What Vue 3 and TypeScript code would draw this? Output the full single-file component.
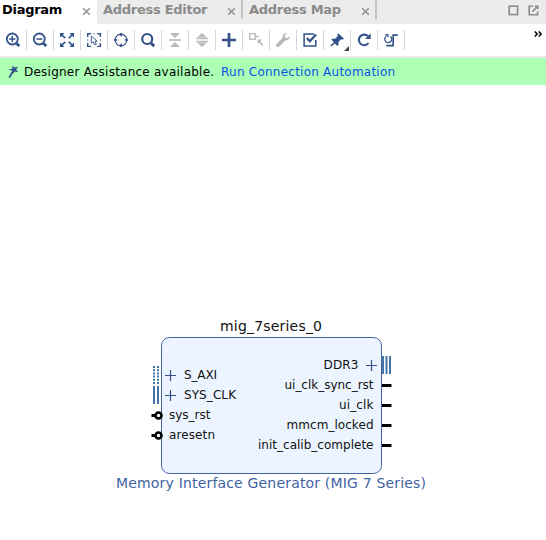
<script setup lang="ts">
interface Tab { label: string; active: boolean; cls: string }
const tabs: Tab[] = [
  { label: 'Diagram', active: true, cls: 't1' },
  { label: 'Address Editor', active: false, cls: 't2' },
  { label: 'Address Map', active: false, cls: 't3' },
]

const tools: string[] = ['zoomin', 'zoomout', 'fit', 'select', 'target', 'search', 'collapse', 'expand', 'add', 'hier', 'wrench', 'validate', 'pin', 'refresh', 'regen']

interface Pin { name: string; y: number; width: number }
const outputs: Pin[] = [
  { name: 'ui_clk_sync_rst', y: 385, width: 89 },
  { name: 'ui_clk', y: 405, width: 34.5 },
  { name: 'mmcm_locked', y: 425, width: 87 },
  { name: 'init_calib_complete', y: 445, width: 115.5 },
]
const inputs: Pin[] = [
  { name: 'sys_rst', y: 415, width: 41.5 },
  { name: 'aresetn', y: 435, width: 46 },
]
</script>

<template>
  <div class="window">
    <header class="tabs">
      <div v-for="t in tabs" :key="t.label" class="tab" :class="[t.cls, { active: t.active }]">
        <span class="label">{{ t.label }}</span>
        <svg class="close" width="9" height="9" viewBox="0 0 9 9"><path d="M1.2 1.2 7.8 7.8M7.8 1.2 1.2 7.8" /></svg>
      </div>
      <div class="controls">
        <svg width="11" height="11" viewBox="0 0 11 11"><rect x="1.2" y="1.2" width="8.4" height="8.4" /></svg>
        <svg width="11" height="11" viewBox="0 0 11 11"><path d="M5 1.2H1.2V9.8H9.6V6.5M4.3 6.7 8.6 2.4" /><path class="solid" d="M6 .5H10.5V5Z" /></svg>
      </div>
    </header>

    <nav class="toolbar">
      <div v-for="name in tools" :key="name" class="tool">
        <svg width="18" height="18" viewBox="0 0 18 18">
          <g v-if="name === 'zoomin' || name === 'zoomout'">
            <circle cx="8.3" cy="8" r="5.5" stroke-width="1.8" />
            <path d="M12 12 15.3 15.1" stroke-width="2.8" />
            <path d="M5.2 8H11.4" stroke-width="1.5" />
            <path v-if="name === 'zoomin'" d="M8.3 4.9V11.1" stroke-width="1.5" />
          </g>
          <g v-else-if="name === 'fit'">
            <path d="M3.5 3.5 7.2 7.2M14.5 3.5 10.8 7.2M3.5 14.5 7.2 10.8M14.5 14.5 10.8 10.8" stroke-width="1.7" />
            <path class="fill" d="M2 2H6.5L2 6.5ZM16 2H11.5L16 6.5ZM2 16H6.5L2 11.5ZM16 16H11.5L16 11.5Z" />
          </g>
          <g v-else-if="name === 'select'">
            <path d="M2.7 6V2.7H6M12.2 2.7H15.4V6M15.4 12V15.4H12.2M6 15.4H2.7V12" stroke-width="1.4" />
            <path d="M8 2.7H10.2M15.4 8V10.2M2.7 10.2V8" stroke-width="1" opacity=".6" />
            <path d="M6.3 5V12.3L8.2 10.8 9.9 14 11.4 13.2 9.9 10.3H12.2Z" stroke-width=".9" />
          </g>
          <g v-else-if="name === 'target'">
            <circle cx="9" cy="9" r="5.8" stroke-width="1.2" />
            <path d="M9 2V5.3M9 12.7V16M2 9H5.3M12.7 9H16" stroke-width="1.6" />
          </g>
          <g v-else-if="name === 'search'">
            <circle cx="8.2" cy="8" r="5" stroke-width="2.2" />
            <path d="M12 12 15.2 15.2" stroke-width="3" />
          </g>
          <g v-else-if="name === 'collapse'" class="off">
            <path class="fill" d="M4 2H14L9 7ZM4 16H14L9 11Z" />
            <path d="M3 9H15" stroke-width="1.6" />
          </g>
          <g v-else-if="name === 'expand'" class="off">
            <path class="fill" d="M4 6.5H14L9 2ZM4 11.5H14L9 16Z" />
            <path d="M3.2 7.5H14.8M3.2 10.5H14.8" stroke-width="1.4" />
          </g>
          <path v-else-if="name === 'add'" d="M9 2V16M2 9H16" stroke-width="2.7" />
          <g v-else-if="name === 'hier'" class="off">
            <rect x="2.7" y="2.7" width="5.6" height="5.6" stroke-width="1.3" />
            <path d="M9 5.5H11.5M12 10 15.5 14.5" stroke-width="1.5" />
            <path class="fill" d="M10.7 8.5H15.2L10.7 13Z" />
          </g>
          <g v-else-if="name === 'wrench'" class="off">
            <path d="M4 14.1 10.2 7.9" stroke-width="3.8" stroke-linecap="round" />
            <path class="fill" d="M12.8 2 10.9 2.3C8.6 3.4 8.2 5.2 8.8 7.4L11 9.3C14 9.8 15.9 7.9 15.8 5L13.2 7.2 11 6.6 10.6 4.5Z" />
          </g>
          <g v-else-if="name === 'validate'">
            <path d="M13 3.1H3.1V14.9H14.8V9" stroke-width="1.5" />
            <path d="M6 7 8.8 10.3 15 3.5" stroke-width="2.2" />
          </g>
          <g v-else-if="name === 'pin'">
            <path class="fill" d="M10.3 2.2 16 7.7 14.7 8.4 12.8 8.5 10.4 11 10.5 13.8 9.4 15 3.3 8.6 4.5 7.7 7.1 7.8 9.6 5.3 9.5 3.2Z" />
            <path d="M7.4 11.2 2.8 15" stroke-width="1.6" />
          </g>
          <g v-else-if="name === 'refresh'">
            <path d="M13.1 5.3A5.3 5.3 0 1 0 13.5 12" stroke-width="2.1" />
            <path class="fill" d="M15.7 2.3V8H10.1Z" />
          </g>
          <g v-else>
            <path d="M4.3 5.2A3.5 3.5 0 1 0 8.5 5.4" stroke-width="1.3" />
            <path class="fill" d="M2.8 3H6.5V6.7Z" />
            <path d="M4.2 14.6H11.2V4.1H15.8" stroke-width="1.7" />
          </g>
        </svg>
        <svg v-if="name === 'pin'" class="corner" width="5" height="5" viewBox="0 0 5 5"><path d="M5 0V5H0Z" /></svg>
      </div>
      <svg class="more" width="9" height="6" viewBox="0 0 9 6"><path d="M.7.5 3.2 3 .7 5.5M4.7.5 7.2 3 4.7 5.5" /></svg>
    </nav>

    <div class="banner">
      <svg width="14" height="14" viewBox="0 0 14 14"><path class="wand" d="M5.8 6.5 2.3 12.6" /><path class="star" d="M5.5 .5 7.5 2.5 11 1.7 9.2 4.4 11.3 6.9 7.9 6.6 6.3 8.6 5.4 6 1.6 4.2 5.4 3.7Z" /></svg>
      <span class="message">Designer Assistance available.</span>
      <a class="link">Run Connection Automation</a>
    </div>

    <svg class="canvas" width="546" height="455" viewBox="0 85 546 455">
      <text class="title" x="220" y="331" textLength="102">mig_7series_0</text>
      <rect class="block" x="161.5" y="337.5" width="220" height="136" rx="8" />
      <path class="bus dotted" d="M154 366V384M158 366V384" />
      <path class="bus" d="M154 386V404M158 386V404M383 356V374M386.5 356V374M390 356V374" />
      <path class="plus" d="M165 375.5H176M170.5 370V381M165 395.5H176M170.5 390V401M366 365.5H377M371.5 360V371" />
      <text x="184" y="379" textLength="33">S_AXI</text>
      <text x="184" y="399" textLength="52">SYS_CLK</text>
      <text x="323.5" y="369" textLength="35">DDR3</text>
      <g v-for="p in inputs" :key="p.name">
        <path class="lead" :d="`M151.5 ${p.y + 0.5}H156`" />
        <circle class="invert" cx="158.5" :cy="p.y + 0.5" r="3" />
        <text x="169" :y="p.y + 4" :textLength="p.width">{{ p.name }}</text>
      </g>
      <g v-for="p in outputs" :key="p.name">
        <text :x="373.5 - p.width" :y="p.y + 4" :textLength="p.width">{{ p.name }}</text>
        <path class="lead" :d="`M382 ${p.y + 0.5}H391.5`" />
      </g>
      <text class="caption" x="116" y="488" textLength="310">Memory Interface Generator (MIG 7 Series)</text>
    </svg>
  </div>
</template>

<style>
body { margin: 0; background: #fff; }
</style>

<style scoped>
.window { width: 546px; height: 540px; overflow: hidden; background: #fff; color: #000; font-family: "DejaVu Sans", sans-serif; }
svg { display: block; fill: none; flex: none; }
.tabs { display: flex; height: 24px; background: #ececec; }
.tab { box-sizing: border-box; display: flex; justify-content: space-between; height: 19px; color: #8a8a8a; font-size: 13px; font-weight: bold; letter-spacing: -.28px; line-height: 19px; white-space: nowrap; }
.active { height: 24px; background: #fff; color: #000; }
.t1 { width: 97px; padding: 0 6px 0 2px; }
.t2 { width: 146px; padding: 0 5px 0 6px; border-right: 2px solid #c2c2c2; }
.t3 { width: 134px; padding: 0 5px 0 6px; border-right: 2px solid #c2c2c2; }
.close { margin-top: 7px; stroke: #8f8f8f; stroke-width: 1.5; }
.controls { display: flex; gap: 9px; margin: 5px 7px 0 auto; }
.controls svg { stroke: #8a8a8a; stroke-width: 1.6; }
.controls .solid { fill: #8a8a8a; stroke: none; }
.toolbar { box-sizing: border-box; display: flex; align-items: center; height: 34px; border-bottom: 2px solid #e8e8e8; }
.tool { position: relative; box-sizing: border-box; display: flex; justify-content: center; align-items: center; width: 27px; height: 20px; border-right: 1px solid #d6d6d6; }
.tool svg { stroke: #34528a; color: #34528a; }
.tool .off { stroke: #b9b9b9; color: #b9b9b9; }
.tool .fill { fill: currentColor; stroke: none; }
.tool .corner { position: absolute; right: 1px; bottom: -1px; fill: #444; stroke: none; }
.more { margin: -13px 3px 0 auto; stroke: #000; stroke-width: 1.5; }
.banner { display: flex; align-items: center; height: 27px; padding-left: 7px; background: #acffb4; font-size: 12px; letter-spacing: .235px; line-height: 27px; white-space: nowrap; }
.banner svg { margin-right: 3px; }
.message { position: relative; top: 1px; }
.wand { stroke: #34528a; stroke-width: 1.8; }
.star { fill: #34528a; }
.link { position: relative; top: 1px; margin-left: 6.7px; color: #0b50e8; }
.canvas { font-size: 12px; }
.canvas text { fill: #111; }
.canvas .title { font-size: 14px; }
.canvas .caption { font-size: 14px; fill: #3f62a4; }
.block { fill: #ecf5ff; stroke: #4263a5; }
.bus { stroke: #4475a5; stroke-width: 2; }
.dotted { stroke-dasharray: 2 1.2; }
.plus { stroke: #34528a; stroke-width: 1.2; }
.lead { stroke: #000; stroke-width: 3; }
.invert { fill: #fff; stroke: #000; stroke-width: 2.6; }
</style>
